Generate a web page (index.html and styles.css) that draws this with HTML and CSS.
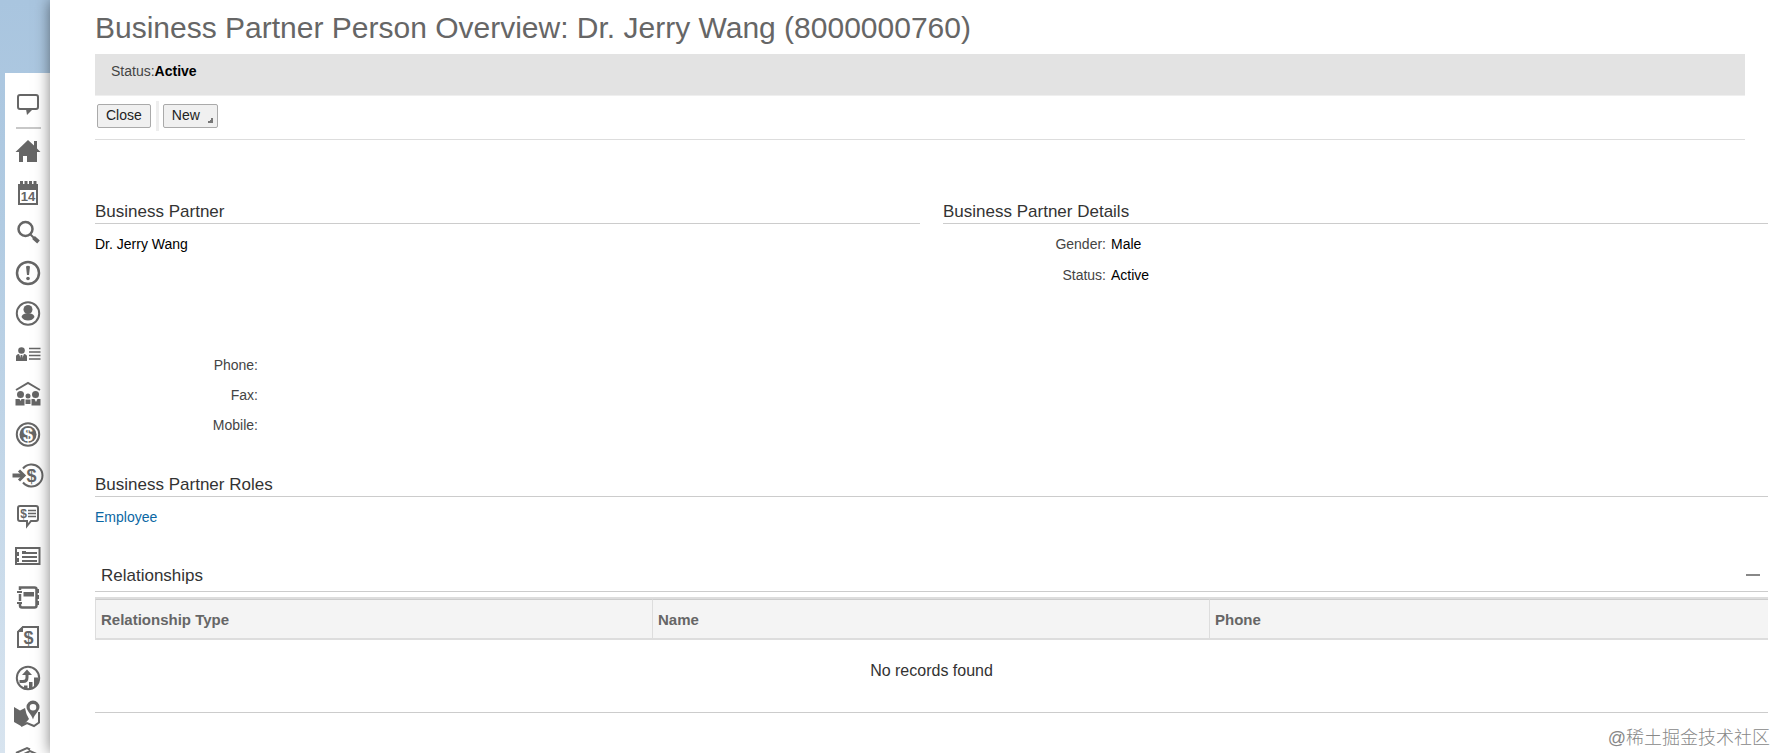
FILE: index.html
```html
<!DOCTYPE html>
<html lang="en">
<head>
    <meta charset="UTF-8">
    <meta name="viewport" content="width=device-width, initial-scale=1.0">
    <title>Business Partner Person Overview</title>
    <link rel="stylesheet" href="styles.css">
</head>
<body>
    <nav class="rail" aria-label="Work centers">
        <a href="#" class="rail-link feed" aria-label="Feed">
            <svg class="icon" viewBox="0 0 40 40"><path class="line" d="M12 11h16a2 2 0 0 1 2 2v10a2 2 0 0 1-2 2H12a2 2 0 0 1-2-2V13a2 2 0 0 1 2-2z"/><path d="M18 25h7l-6 6z"/></svg>
        </a>
        <hr class="rail-line">
        <div class="rail-list">
            <a href="#" class="rail-link" aria-label="Home">
                <svg class="icon" viewBox="0 0 40 40"><path d="M20 9l6 5.500V10h3v7.500L32.500 21H29v10H19v-6h-4v6h-4V21H7.500z"/></svg>
            </a>
            <a href="#" class="rail-link" aria-label="Calendar">
                <svg class="icon" viewBox="0 0 40 40"><path d="M10 13h20v21H10zM12 19v13h16V19z" fill-rule="evenodd"/><path d="M12 10h3v6h-3zM16.500 10h3v6h-3zM21 10h3v6h-3zM25.500 10h3v6h-3z"/><text class="day" x="20" y="30">14</text></svg>
            </a>
            <a href="#" class="rail-link" aria-label="Search">
                <svg class="icon" viewBox="0 0 40 40"><circle class="line mid" cx="17.500" cy="17" r="7"/><path class="line" d="M22 22l4 4"/><path class="line thick" d="M25.500 25.500l5 4.500"/></svg>
            </a>
            <a href="#" class="rail-link" aria-label="Alerts">
                <svg class="icon" viewBox="0 0 40 40"><circle class="line mid" cx="20" cy="21" r="11"/><path d="M18 14.500q2-1.500 4 0l-1 8.500h-2z"/><circle cx="20" cy="26.500" r="1.800"/></svg>
            </a>
            <a href="#" class="rail-link" aria-label="Account">
                <svg class="icon" viewBox="0 0 40 40"><circle class="line" cx="20" cy="20.500" r="11.200"/><circle cx="20" cy="16.500" r="4.500"/><path d="M13.500 24q.5-3 4-3.500h5q3.500 .5 4 3.500-2 3.500-6.500 3.500T13.500 24z"/></svg>
            </a>
            <a href="#" class="rail-link" aria-label="Contacts">
                <svg class="icon" viewBox="0 0 40 40"><circle cx="13.500" cy="17.500" r="3.300"/><path d="M8 28v-4.500q0-2 3-2.500l2.500 6 2.500-6q3 .5 3 2.500V28z"/><path d="M12.700 22h1.600l.6 4-1.400 2-1.400-2z"/><path class="line thin" d="M21 15.500h11.500M21 19h11.500M21 22.500h11.500M21 26h11.500"/></svg>
            </a>
            <a href="#" class="rail-link" aria-label="Households">
                <svg class="icon" viewBox="0 0 40 40"><path class="line" d="M8 16l12-7 12 7"/><circle cx="12.500" cy="20.500" r="3.500"/><circle cx="20" cy="22" r="2.500"/><circle cx="27.500" cy="20.500" r="3.500"/><path d="M7.500 25h4l1 2 1-2h3v6.500h-9zM17.500 25.500h5V30h-5zM23.500 25h3l1.500 3 1.500-3h3v6.500h-9z"/></svg>
            </a>
            <a href="#" class="rail-link" aria-label="Sales">
                <svg class="icon" viewBox="0 0 40 40"><circle class="line" cx="20" cy="20.500" r="11.200"/><circle cx="20" cy="20.500" r="8.500"/><text class="dollar light" x="20" y="26.500">$</text></svg>
            </a>
            <a href="#" class="rail-link" aria-label="Opportunities">
                <svg class="icon" viewBox="0 0 40 40"><path class="line" d="M15 13.500a11 11 0 1 1 0 14"/><path class="line thick" d="M4.500 20.500H15"/><path class="line bold" d="M11 15.500l5 5-5 5"/><text class="dollar" x="23.500" y="27">$</text></svg>
            </a>
            <a href="#" class="rail-link" aria-label="Quotations">
                <svg class="icon" viewBox="0 0 40 40"><path class="line" d="M12 11h16a2 2 0 0 1 2 2v11a2 2 0 0 1-2 2h-5l-4 5v-5h-7a2 2 0 0 1-2-2V13a2 2 0 0 1 2-2z"/><text class="dollar small" x="15.500" y="23">$</text><path class="line thin" d="M20 15.500h8M20 18.500h8M20 21.500h8"/></svg>
            </a>
            <a href="#" class="rail-link" aria-label="Tickets">
                <svg class="icon" viewBox="0 0 40 40"><path class="line" d="M8 12h23.500v16H8v-3h2v-2H8v-4h2v-2H8z"/><path d="M14 15h4v3h-4z"/><path class="line" d="M18 17h11M14 21h15M14 25h15"/></svg>
            </a>
            <a href="#" class="rail-link" aria-label="Address book">
                <svg class="icon" viewBox="0 0 40 40"><path class="line mid" d="M12 14v-2.500h14.500a2 2 0 0 1 2 2v16a2 2 0 0 1-2 2H14q-2 0-2-2V28M12 18v7"/><path class="line" d="M9 16h5M9 27h5"/><path d="M15.500 16H26v4.500H15.500zM29 13h2v4h-2zM29 19h2v4h-2zM29 25h2v4h-2z"/></svg>
            </a>
            <a href="#" class="rail-link" aria-label="Invoices">
                <svg class="icon" viewBox="0 0 40 40"><path class="line" d="M15 10h15v20H10V15z"/><path d="M9 15l6-6v6z"/><text class="dollar" x="20.500" y="26.500">$</text></svg>
            </a>
            <a href="#" class="rail-link" aria-label="Forecast">
                <svg class="icon" viewBox="0 0 40 40"><circle class="line" cx="20" cy="21" r="11.200"/><path class="line bold" d="M11.500 24.500H15q4 0 4-4v-4"/><path d="M14 18l5-5.500 5 5.500zM16 28.500h3.500v4H16zM21 25h3.500v7H21zM26 20.500h4V27l-4 3.500z"/></svg>
            </a>
            <a href="#" class="rail-link" aria-label="Territories">
                <svg class="icon" viewBox="0 0 40 40"><path d="M6 9l6 3.500 5-2.500 1.500 6 2.500 5-4 4.500-4 2.500-7-4z"/><path class="line" d="M13 28l6-3 7 3 5-3.500V14"/><path d="M25 2.500a6.500 6.500 0 0 1 6.500 6.500c0 4-5 7-6.500 12.500C23.500 16 18.500 13 18.500 9A6.500 6.500 0 0 1 25 2.500zM25 6a3.300 3.300 0 1 0 0 6.600A3.300 3.300 0 0 0 25 6z" fill-rule="evenodd"/></svg>
            </a>
            <a href="#" class="rail-link" aria-label="Products">
                <svg class="icon" viewBox="0 0 40 40"><path class="line" d="M8 15l11-5 3 1.500M10 19l12-6 10 4.500"/></svg>
            </a>
        </div>
    </nav>

    <main class="page">
        <header class="page-header">
            <h1>Business Partner Person Overview: Dr. Jerry Wang (8000000760)</h1>
            <div class="status-bar">Status:<b>Active</b></div>
            <div class="toolbar">
                <button type="button" class="button">Close</button>
                <span class="separator"></span>
                <button type="button" class="button menu">New</button>
            </div>
        </header>

        <div class="columns">
            <section>
                <h2>Business Partner</h2>
                <p class="value">Dr. Jerry Wang</p>
                <dl class="fields contact">
                    <dt>Phone:</dt><dd></dd>
                    <dt>Fax:</dt><dd></dd>
                    <dt>Mobile:</dt><dd></dd>
                </dl>
            </section>
            <section>
                <h2>Business Partner Details</h2>
                <dl class="fields details">
                    <dt>Gender:</dt><dd>Male</dd>
                    <dt>Status:</dt><dd>Active</dd>
                </dl>
            </section>
        </div>

        <section class="roles">
            <h2>Business Partner Roles</h2>
            <a href="#" class="role-link">Employee</a>
        </section>

        <section class="relationships">
            <div class="section-bar">
                <h2>Relationships</h2>
                <button type="button" class="collapse" aria-label="Collapse"></button>
            </div>
            <table>
                <thead>
                    <tr><th>Relationship Type</th><th>Name</th><th>Phone</th></tr>
                </thead>
                <tbody>
                    <tr><td colspan="3">No records found</td></tr>
                </tbody>
            </table>
        </section>
    </main>
    <div class="watermark">@稀土掘金技术社区</div>
</body>
</html>
```
FILE: styles.css
```css
* {
    box-sizing: border-box;
}
body {
    margin: 0;
    height: 100vh;
    display: flex;
    overflow: hidden;
    font-family: "Liberation Sans", Arial, sans-serif;
    font-size: 14px;
    line-height: 20px;
    color: #000;
    background: linear-gradient(#a9c5df, #b1cbe2 30%, #d8e4ef);
}
h1, h2, p, dl, dd {
    margin: 0;
    font-weight: normal;
}

/* left icon rail */
.rail {
    flex: 0 0 45px;
    margin: 73px 0 0 5px;
    padding: 11px 0 0 3px;
    background: #fff;
    overflow: hidden;
}
.rail-link {
    display: block;
    height: 40px;
}
.rail-list .rail-link:nth-child(even) {
    height: 41px;
}
.feed {
    height: 43px;
}
.rail-line {
    width: 25px;
    height: 2px;
    margin: 0 0 2px 8px;
    border: 0;
    background: #c8c8c8;
}
.icon {
    display: block;
    width: 40px;
    height: 40px;
    fill: #666;
}
.line {
    fill: none;
    stroke: #666;
    stroke-width: 2;
}
.thin {
    stroke-width: 1.5;
}
.mid {
    stroke-width: 2.5;
}
.bold {
    stroke-width: 3;
}
.thick {
    stroke-width: 4;
}
.icon text {
    text-anchor: middle;
    font-weight: bold;
}
.day {
    font-size: 13px;
}
.dollar {
    font-size: 18px;
}
.small {
    font-size: 12px;
}
.light {
    fill: #fff;
}

/* page */
.page {
    position: relative;
    flex: 1;
    min-width: 0;
    padding: 11px 8px 0 45px;
    background: #fff;
    box-shadow: 0 0 14px rgba(0, 0, 0, 0.5);
}
.page-header {
    margin-right: 23px;
    border-bottom: 1px solid #ddd;
}
h1 {
    font-size: 30px;
    line-height: 34px;
    color: #666;
}
.status-bar {
    height: 42px;
    margin-top: 9px;
    padding: 7px 16px;
    background: #e3e3e3;
    border-bottom: 1px solid #efefef;
    color: #444;
}
.status-bar b {
    color: #000;
}
.toolbar {
    display: flex;
    align-items: center;
    height: 43px;
    padding: 0 2px 3px;
}
.button {
    height: 24px;
    padding: 0 8px 2px;
    font: inherit;
    line-height: 20px;
    color: #222;
    background: #f0f0f0;
    border: 1px solid #aaa;
    border-radius: 2px;
}
.menu {
    display: flex;
    align-items: flex-end;
    gap: 7px;
}
.menu::after {
    content: "";
    width: 6px;
    height: 6px;
    margin: 0 -4px 2px 0;
    background: linear-gradient(135deg, transparent 50%, #777 50%);
}
.separator {
    width: 3px;
    height: 30px;
    margin: 0 4px 0 5px;
    background: #eee;
}

h2 {
    padding-top: 2px;
    font-size: 17px;
    line-height: 22px;
    color: #333;
    border-bottom: 1px solid #ccc;
}
.columns {
    display: grid;
    grid-template-columns: 1fr 1fr;
    gap: 23px;
    margin-top: 59px;
}
.value {
    margin-top: 10px;
}
.fields {
    display: grid;
    grid-template-columns: 163px 1fr;
    column-gap: 5px;
    row-gap: 10px;
}
.fields dt {
    text-align: right;
    color: #444;
}
.contact {
    margin-top: 101px;
}
.details {
    margin-top: 10px;
    row-gap: 11px;
}
.roles {
    margin-top: 37px;
}
.role-link {
    display: block;
    margin-top: 10px;
    color: #0b67a3;
    text-decoration: none;
}

/* relationships */
.relationships {
    margin-top: 32px;
}
.section-bar {
    display: flex;
    justify-content: space-between;
    align-items: center;
    height: 33px;
    padding: 0 6px;
    border-bottom: 1px solid #ccc;
}
.section-bar h2 {
    border: 0;
}
.collapse {
    width: 18px;
    height: 18px;
    padding: 0 2px;
    border: 0;
    background: none;
}
.collapse::before {
    content: "";
    display: block;
    height: 2px;
    background: #888;
}
table {
    width: 100%;
    margin-top: 5px;
    table-layout: fixed;
    border-spacing: 0;
    border-top: 2px solid #ddd;
    border-bottom: 1px solid #ccc;
}
th {
    width: 557px;
    height: 41px;
    padding: 2px 5px 0;
    text-align: left;
    font-size: 15px;
    color: #666;
    background: #f4f4f4;
    border-top: 1px solid #ccc;
    border-bottom: 2px solid #ddd;
    border-left: 1px solid #ddd;
}
th:last-child {
    width: auto;
}
td {
    height: 72px;
    padding: 0 0 10px;
    text-align: center;
    font-size: 16px;
    color: #333;
}
.watermark {
    position: absolute;
    right: 6px;
    bottom: 3px;
    font-family: "Liberation Sans", "Noto Sans CJK SC", sans-serif;
    font-size: 18px;
    font-weight: 300;
    line-height: 24px;
    color: #888;
}
```
